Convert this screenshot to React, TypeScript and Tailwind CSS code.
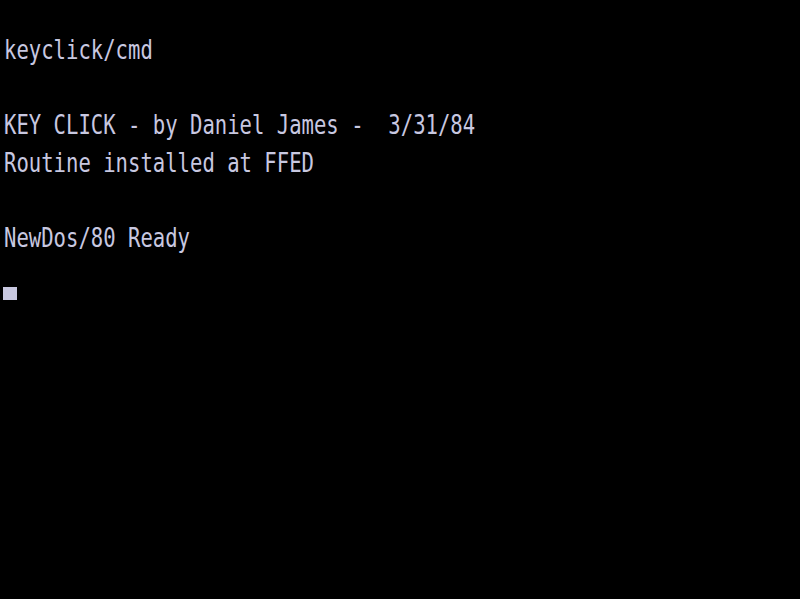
const rows: string[] = [
  "",
  "keyclick/cmd",
  "",
  "KEY CLICK - by Daniel James -  3/31/84",
  "Routine installed at FFED",
  "",
  "NewDos/80 Ready",
]

export default function App() {
  return (
    <div className="h-[599px] w-[800px] overflow-hidden bg-black pl-[4px] text-[#c8c8e0]">
      {rows.map((line, i) => (
        <div key={i} className="flex h-[37.44px] items-start">
          <span
            className="mt-[2px] inline-block origin-top-left scale-y-[1.33] whitespace-pre text-[20.6px] leading-[16.5px]"
            style={{ fontFamily: '"DejaVu Sans Mono", monospace' }}
          >
            {line}
          </span>
        </div>
      ))}
      <div className="flex h-[37.44px] items-start">
        <div className="ml-[-1px] mt-[25px] h-[13px] w-[14px] bg-[#c8c8e0]" />
      </div>
    </div>
  )
}
